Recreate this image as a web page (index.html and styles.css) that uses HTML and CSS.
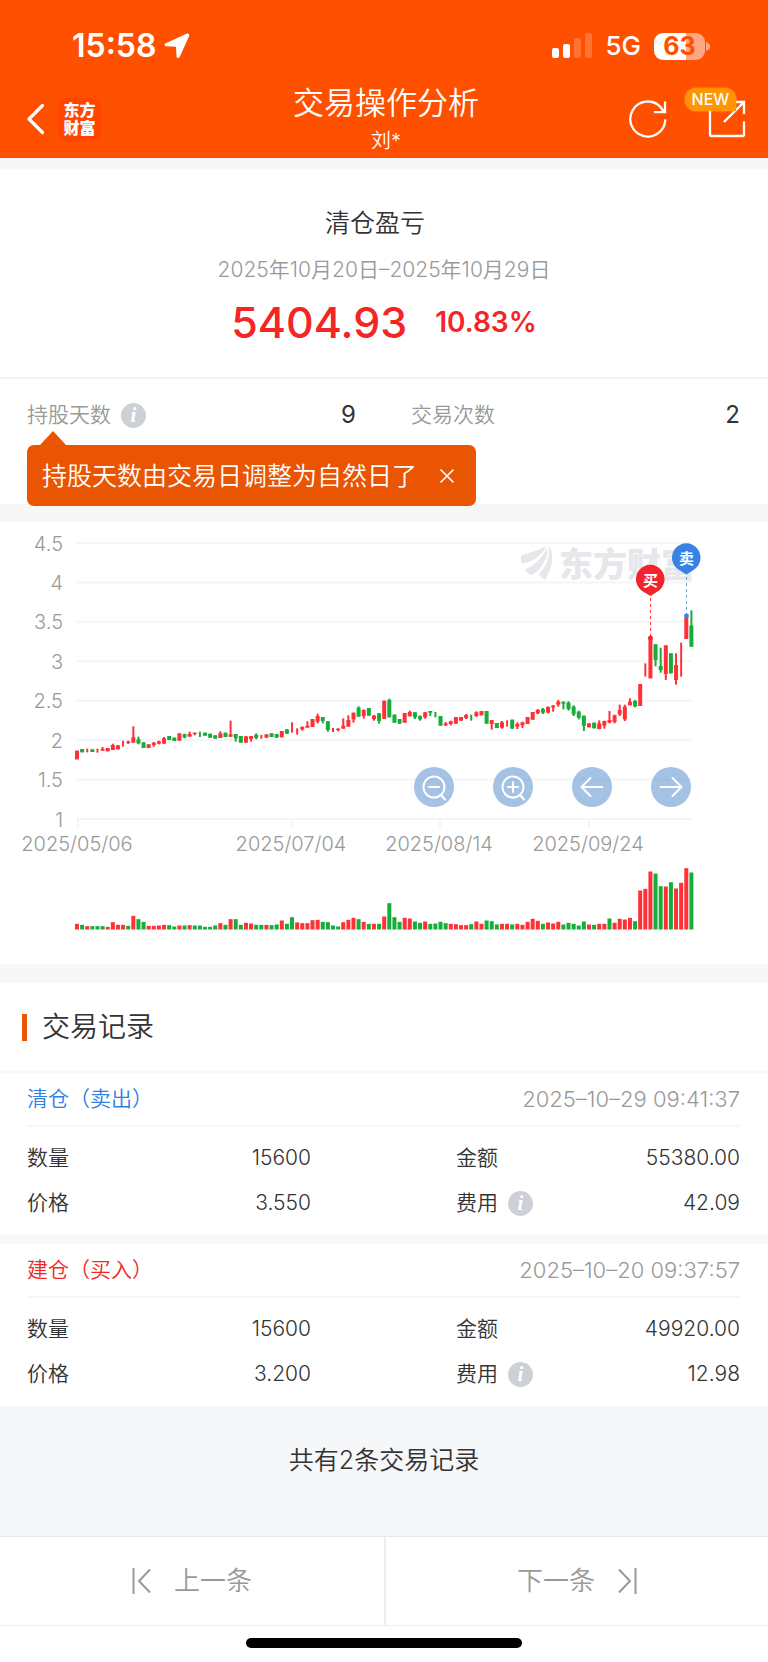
FILE: index.html
```html
<!DOCTYPE html>
<html lang="zh-CN">
<head>
<meta charset="utf-8">
<meta name="viewport" content="width=device-width, initial-scale=1">
<title>交易操作分析</title>
<link rel="stylesheet" href="styles.css">
</head>
<body>
<header class="header">
  <div class="status">
    <div class="status-left">
      <span class="time">15:58</span>
      <svg width="26" height="26" viewBox="0 0 26 26"><path d="M22.500 .8 1.800 10.200C-.2 11.200.3 13.200 2.200 13.300L12 13.800 12.500 23.300C12.600 25.300 14.900 25.700 15.700 23.900L25 3.200C25.700 1.500 24.200.1 22.500.8Z" fill="#fff"/></svg>
    </div>
    <div class="status-right">
      <svg width="40" height="26" viewBox="0 0 40 26" fill="#fff"><rect x="0" y="15" width="7" height="10" rx="2"/><rect x="11" y="11" width="7" height="14" rx="2"/><g opacity=".2"><rect x="22" y="5" width="7" height="20" rx="2"/><rect x="33" y="0" width="7" height="25" rx="2"/></g></svg>
      <span class="network">5G</span>
      <span class="battery"><span class="battery-level">63</span><svg class="battery-tip" width="4" height="9" viewBox="0 0 4 9"><path d="M0 0Q4 1.500 4 4.500T0 9Z" fill="#fff" opacity=".5"/></svg></span>
    </div>
  </div>
  <div class="nav">
    <div class="nav-left">
      <button class="icon-button" aria-label="返回"><svg width="19" height="32" viewBox="0 0 19 32"><path d="M16.500 2.500 3 16 16.500 29.500" fill="none" stroke="#fff" stroke-width="3.200" stroke-linecap="round" stroke-linejoin="round"/></svg></button>
      <span class="brand">东方<br>财富</span>
    </div>
    <div class="nav-title"><h1>交易操作分析</h1><p>刘*</p></div>
    <div class="nav-right">
      <button class="icon-button" aria-label="刷新"><svg width="38" height="38" viewBox="0 0 38 38" fill="none" stroke="#fff" stroke-width="2.300"><path d="M36.300 19.500A17.500 17.500 0 1 1 31 6.500L35 11.500"/><path d="M36 1.500V12.200H25"/></svg></button>
      <button class="icon-button share" aria-label="分享"><svg width="38" height="38" viewBox="0 0 38 38" fill="none" stroke="#fff" stroke-width="2.300"><path d="M19 2H3.500Q2 2 2 3.500V34.500Q2 36 3.500 36H34.500Q36 36 36 34.500V21.500M25 2H36V14M36 2 16 22"/></svg><span class="badge">NEW</span></button>
    </div>
  </div>
</header>

<main>
  <section class="summary">
    <h2>清仓盈亏</h2>
    <p class="period">2025年10月20日–2025年10月29日</p>
    <p class="profit"><strong>5404.93</strong><span>10.83%</span></p>
  </section>
  <section class="stats">
    <div class="stat"><span class="stat-label">持股天数</span><button class="info" aria-label="说明">i</button><span class="stat-value">9</span></div>
    <div class="stat"><span class="stat-label">交易次数</span><span class="stat-value">2</span></div>
    <div class="tip" role="status">持股天数由交易日调整为自然日了<button class="icon-button" aria-label="关闭"><svg width="16" height="16" viewBox="0 0 16 16"><path d="M1.500 1.500 14.500 14.500M14.500 1.500 1.500 14.500" stroke="#fff" stroke-width="1.700"/></svg></button></div>
  </section>

  <section class="chart">
    <svg id="chart" class="chart-canvas" viewBox="0 0 768 442" role="img" aria-label="股价走势">
      <g id="grid" class="axis"></g>
      <g fill="#e6e6eb">
        <path d="M521 33.500C529 31 538 29 546 24.300C542 33 534 40 521.500 41.500C520.800 39 520.800 36 521 33.500Z M525 47.500C536 43 544 34 547.300 25C549 37 540 49 531 53C528 51.500 526 49.500 525 47.500Z M549 24.300C554.500 31 553 46 544.500 58.500C543.500 56.500 541 54 538.500 52.500C546 46 550 35 549 24.300Z"/>
        <text class="watermark" x="559" y="55">东方财富</text>
      </g>
      <g id="candles"></g>
      <g id="volumes"></g>
      <g class="marker">
        <path d="M650.500 76V114" stroke="#f4333c" stroke-dasharray="3 3"/>
        <circle cx="650.500" cy="116" r="2.400" fill="#f4222a"/>
        <path d="M650.500 74 643 69.500A14.300 14.300 0 1 1 657.500 69.500Z" fill="#f4222a"/>
        <text x="650.500" y="63.500">买</text>
      </g>
      <g class="marker">
        <path d="M686.500 55V92" stroke="#67a7ee" stroke-dasharray="3 3"/>
        <circle cx="686.500" cy="94" r="2.400" fill="#3782e4"/>
        <path d="M686.300 52.500 679 48A14.300 14.300 0 1 1 693.500 48Z" fill="#3782e4"/>
        <text x="686.500" y="41.500">卖</text>
      </g>
    </svg>
    <div class="chart-tools">
      <button aria-label="缩小"><svg viewBox="0 0 40 40"><circle cx="20" cy="20" r="10.500"/><path d="M27 28 31 32.500M15 20H25"/></svg></button>
      <button aria-label="放大"><svg viewBox="0 0 40 40"><circle cx="20" cy="20" r="10.500"/><path d="M27 28 31 32.500M15 20H25M20 15V25"/></svg></button>
      <button aria-label="左移"><svg viewBox="0 0 40 40"><path d="M30.500 20H9.500M18.500 11 9.500 20 18.500 29"/></svg></button>
      <button aria-label="右移"><svg viewBox="0 0 40 40"><path d="M9.500 20H30.500M21.500 11 30.500 20 21.500 29"/></svg></button>
    </div>
  </section>

  <section class="records">
    <h2 class="records-title">交易记录</h2>
    <article class="record">
      <header class="record-head"><h3 class="sell">清仓（卖出）</h3><time>2025–10–29 09:41:37</time></header>
      <dl>
        <div><dt>数量</dt><dd>15600</dd></div>
        <div><dt>金额</dt><dd>55380.00</dd></div>
        <div><dt>价格</dt><dd>3.550</dd></div>
        <div><dt>费用<button class="info" aria-label="说明">i</button></dt><dd>42.09</dd></div>
      </dl>
    </article>
    <article class="record">
      <header class="record-head"><h3 class="buy">建仓（买入）</h3><time>2025–10–20 09:37:57</time></header>
      <dl>
        <div><dt>数量</dt><dd>15600</dd></div>
        <div><dt>金额</dt><dd>49920.00</dd></div>
        <div><dt>价格</dt><dd>3.200</dd></div>
        <div><dt>费用<button class="info" aria-label="说明">i</button></dt><dd>12.98</dd></div>
      </dl>
    </article>
  </section>
  <p class="total">共有2条交易记录</p>
</main>

<nav class="pager">
  <button><svg width="20" height="26" viewBox="0 0 20 26"><path d="M1.500 0V26M18 1.500 7 13 18 24.500"/></svg>上一条</button>
  <button>下一条<svg width="20" height="26" viewBox="0 0 20 26"><path d="M18.500 0V26M2 1.500 13 13 2 24.500"/></svg></button>
</nav>
<div class="home"><span></span></div>
<script src="chart.js"></script>
</body>
</html>
```
FILE: styles.css
```css
* { box-sizing: border-box; }
body, h1, h2, h3, p, dl, dd { margin: 0; }
h1, h2, h3 { font-weight: 350; }
body {
  background: #f7f7f7;
  color: #333;
  font-family: Inter, "Noto Sans CJK SC", sans-serif;
  font-size: 21px;
  font-weight: 350;
  line-height: 32px;
}
button { border: 0; padding: 0; background: none; color: inherit; font: inherit; }
svg { display: block; flex: none; }
.icon-button { display: block; position: relative; }

.header { height: 158px; background: #ff5000; color: #fff; }
.status { display: flex; justify-content: space-between; align-items: center; padding: 28px 63px 0 72px; height: 64px; }
.status-left, .status-right { display: flex; align-items: center; }
.status-left { gap: 8px; }
.time { font-size: 32px; font-weight: 600; }
.status-right { gap: 13px; }
.network { font-size: 26px; font-weight: 500; }
.battery { position: relative; }
.battery-level {
  display: block;
  width: 51px;
  border-radius: 9px;
  background: linear-gradient(90deg, #fff 63%, #ffa780 63%);
  color: #ff5000;
  font-size: 25px;
  font-weight: 700;
  line-height: 27px;
  text-align: center;
}
.battery-tip { position: absolute; left: 52px; top: 9px; }
.nav { display: grid; grid-template-columns: 1fr auto 1fr; align-items: center; padding: 16px 22px 0 26px; }
.nav-left { display: flex; align-items: center; gap: 13px; padding-top: 2px; }
.brand {
  width: 43px;
  height: 43px;
  padding-top: 3px;
  border-radius: 9px;
  background: #ff4600;
  font-size: 16px;
  font-weight: 900;
  line-height: 18px;
  text-align: center;
}
.nav-title { text-align: center; }
.nav-title h1 { font-size: 31px; line-height: 46px; }
.nav-title p { font-size: 20px; line-height: 30px; }
.nav-right { display: flex; justify-content: flex-end; gap: 41px; padding-top: 2px; }
.badge {
  position: absolute;
  right: 10px;
  top: -12px;
  width: 51px;
  border-radius: 12px 12px 0 12px;
  background: #ff9500;
  box-shadow: 0 0 2px #ffb060;
  font-size: 16px;
  font-weight: 500;
  line-height: 23px;
}

.summary { margin-top: 11px; height: 210px; padding-top: 36px; border-bottom: 2px solid #f3f3f3; background: #fff; text-align: center; }
.summary h2 { padding-right: 18px; font-size: 25px; line-height: 36px; }
.period { margin-top: 13px; color: #999; }
.profit { display: flex; justify-content: center; align-items: center; gap: 28px; margin-top: 8px; color: #f42525; font-size: 28px; font-weight: 600; line-height: 56px; }
.profit strong { font-size: 43px; font-weight: 550; }
.stats { position: relative; display: grid; grid-template-columns: 1fr 1fr; column-gap: 55px; height: 125px; padding: 20px 28px 0 27px; background: #fff; }
.stat { display: flex; align-items: center; height: 32px; }
.stat-label { color: #999; }
.stat-value { margin-left: auto; font-size: 24px; font-weight: 400; }
.info {
  width: 25px;
  height: 25px;
  margin-left: 10px;
  border-radius: 50%;
  background: #cdd0d6;
  color: #fff;
  font: italic bold 21px/25px "Liberation Serif", serif;
  text-align: center;
}
.tip {
  position: absolute;
  left: 27px;
  top: 66px;
  z-index: 1;
  display: flex;
  align-items: center;
  gap: 22px;
  height: 61px;
  padding: 0 21px 0 15px;
  border-radius: 7px;
  background: #ea5504;
  color: #fff;
  font-size: 25px;
}
.tip::before {
  content: "";
  position: absolute;
  left: 13px;
  top: -14px;
  border: solid transparent;
  border-width: 0 13px 14px;
  border-bottom-color: #ea5504;
}

.chart { position: relative; margin-top: 18px; background: #fff; }
.chart-canvas { width: 100%; height: auto; }
.axis { fill: #999; font-size: 20px; }
.axis line { stroke: #f5f5f7; stroke-width: 2; }
.axis .value { text-anchor: end; }
.axis .date { text-anchor: middle; }
.watermark { font-size: 34px; font-weight: 900; }
.marker text { fill: #fff; font-size: 15px; font-weight: 700; text-anchor: middle; }
.up { fill: #ff3137; }
.down { fill: #16ad3a; }
.chart-tools { position: absolute; right: 10%; top: 55.500%; display: flex; gap: 39px; }
.chart-tools button { width: 40px; height: 40px; border-radius: 50%; background: #6799d299; }
.chart-tools svg { fill: none; stroke: #fff; stroke-width: 2; stroke-linecap: round; }

.records { margin-top: 19px; }
.records-title { display: flex; align-items: center; gap: 15px; height: 90px; padding-left: 22px; border-bottom: 2px solid #f7f7f7; background: #fff; font-size: 28px; }
.records-title::before { content: ""; width: 5px; height: 27px; background: #ea5504; }
.record { padding: 0 28px 0 27px; background: #fff; }
.record + .record { margin-top: 9px; }
.record-head { display: flex; justify-content: space-between; align-items: center; height: 54px; border-bottom: 2px solid #f7f7f7; }
.record-head h3 { font-size: 21px; }
.record-head time { color: #999; font-size: 22px; }
.sell { color: #2f7ee3; }
.buy { color: #f42525; }
.record dl { display: grid; grid-template-columns: 1fr 1fr; gap: 13px 145px; padding: 15px 0 16px; }
.record dl div { display: flex; justify-content: space-between; }
.record dt { display: flex; align-items: center; }
.total { height: 130px; padding-top: 37px; background: #f6f7f9; font-size: 25px; line-height: 34px; text-align: center; }

.pager { display: grid; grid-template-columns: 1fr 1fr; border-top: 1px solid #e9e9e9; border-bottom: 1px solid #eee; background: #fff; }
.pager button { display: flex; justify-content: center; align-items: center; gap: 22px; height: 88px; color: #999; font-size: 26px; }
.pager button + button { border-left: 2px solid #eee; }
.pager svg { fill: none; stroke: #999; stroke-width: 2; }
.home { display: flex; justify-content: center; height: 36px; padding-top: 12px; background: #fff; }
.home span { width: 36%; height: 10px; border-radius: 5px; background: #000; }
```
FILE: chart.js
```js
// Each candle: direction, wick top, wick bottom, optional body top and bottom ("w" = wick only).
// Values are thirds of a unit below the base line of their group.
const groups = [
  { base: -2, rows: `R 692 718|G 687 697|R 686 697 w|G 688 696|R 686 698 w|R 681 692 687 692|R 684 694|R 671 690 675 690|R 676 688|R 662 680 w|R 662 672 665 669|R 619 668 652 668|G 650 673 658 670|G 667 684|R 673 684|R 666 680 668 675|R 662 673 664 671|R 651 671 655 671|G 648 660|G 653 663|R 640 662|G 641 655 643 652|R 635 650 642 650|R 638 646 638 642|G 635 651 w|G 638 647|G 641 653|G 646 656|R 634 654 640 654|G 638 651|R 602 651 643 650|G 642 665 642 655|G 648 668|R 649 668|R 648 665 648 657` },
  { base: 158, rows: `G 160 178 165 174|R 165 176 w|R 163 173|G 160 171|G 162 173|R 153 172|G 148 161|R 127 158 w|R 145 164 w|R 139 152 141 148|R 124 143 137 143|R 117 141|R 101 130 108 125|G 111 130 111 123|G 124 155 124 150|R 144 156 w|R 145 154 146 150|R 115 146 137 146|R 106 140 120 140|R 98 128 98 118|G 79 110 83 110|R 88 116 90 108|G 84 107|R 105 122 107 117|G 99 131 100 123|R 62 117|G 56 112 60 112|G 104 128|G 117 131|R 99 128|R 92 110 96 108|G 97 117 97 112|G 106 122 109 118|R 96 116 97 112|G 93 108 93 98|G 96 112 w|G 108 137|R 126 138 131 136|R 122 136 124 132|R 111 131|R 111 122|R 102 117 105 114|G 104 122 w|R 94 111 97 108|R 93 106|G 93 131|R 120 149 120 132|G 129 144|R 123 146 127 143|R 121 140 w|G 119 146|R 127 147 132 140` },
  { base: 8, rows: `R 575 594 577 586|R 561 582|R 546 569|R 537 553 540 550|G 534 552 537 548|R 529 550 531 548|R 525 545 527 532|R 510 530 515 524|G 515 538 515 521|G 514 542 518 537|G 526 558 530 553|G 542 568 545 563|G 557 603 557 587|R 580 592|G 578 595|R 571 598 580 597|R 572 596 573 587|R 543 580 570 578|R 554 580 556 576|R 524 558 540 553|R 524 573 530 568|R 505 526 515 526|G 510 532 513 529|R 462 528|R 400 440 w|R 322 445|G 343 409 343 390|G 353 428 408 420|R 346 450 346 432|G 370 430|R 370 464 405 450|R 338 440 w|R 262 327|G 241 350 287 350` }
];
const volumes = "R17 G14 R10 G10 G10 G10 R8 R22 R14 R14 G11 R41 G31 G23 R11 R11 R12 R14 G13 G9 R12 G12 R13 G12 G12 G8 G8 G12 R19 G14 R31 G31 G14 R20 R18 G14 G14 R14 G13 G15 R27 G17 G37 R21 R19 R19 R28 R29 G23 G22 G12 G9 R22 R29 R35 G31 R23 G17 R17 G17 R39 G79 G37 G23 R35 R33 G24 G20 R24 G17 G18 G23 G19 R17 R16 R13 R13 G16 R24 R17 G27 G25 G15 R17 R17 G15 R17 R14 R23 R32 R26 G17 R21 R18 R23 G15 G20 G17 G12 G24 R15 G14 R17 R17 G33 R20 R32 R30 R35 G25 R117 R122 R174 G168 G130 R129 G142 R123 R140 R184 G171".split(" ");

const rect = (dir, x, y, w, h) =>
  `<rect class="${dir === "R" ? "up" : "down"}" x="${x.toFixed(2)}" y="${y.toFixed(2)}" width="${w}" height="${h.toFixed(2)}"/>`;
const xAt = i => 77 + i * 5.12;

let grid = "";
for (let k = 0; k < 8; k++) {
  const y = 21 + k * 39.43;
  grid += `<line x1="77" x2="691" y1="${y}" y2="${y}"/><text class="value" x="63" y="${y + 7.5}">${4.5 - k * 0.5}</text>`;
}
[["2025/05/06", 78], ["2025/07/04", 292], ["2025/08/14", 440], ["2025/09/24", 589]].forEach(([label, x]) => {
  grid += `<line x1="${x}" x2="${x}" y1="297" y2="306"/><text class="date" x="${x - 1}" y="329">${label}</text>`;
});
document.getElementById("grid").innerHTML = grid;

let candles = "";
let index = 0;
groups.forEach(({ base, rows }) => rows.split("|").forEach(row => {
  const [dir, top, bottom, bodyTop, bodyBottom] = row.split(" ");
  const x = xAt(index++);
  const y = v => base + v / 3;
  candles += rect(dir, x - 1, y(+top), 2, (bottom - top) / 3);
  if (bodyTop !== "w") {
    const a = +(bodyTop || top);
    const b = +(bodyBottom || bottom);
    candles += rect(dir, x - 2, y(a), 4, (b - a) / 3);
  }
}));
document.getElementById("candles").innerHTML = candles;

document.getElementById("volumes").innerHTML = volumes
  .map((v, i) => rect(v[0], xAt(i) - 2, 407.5 - v.slice(1) / 3, 4, v.slice(1) / 3))
  .join("");
```
